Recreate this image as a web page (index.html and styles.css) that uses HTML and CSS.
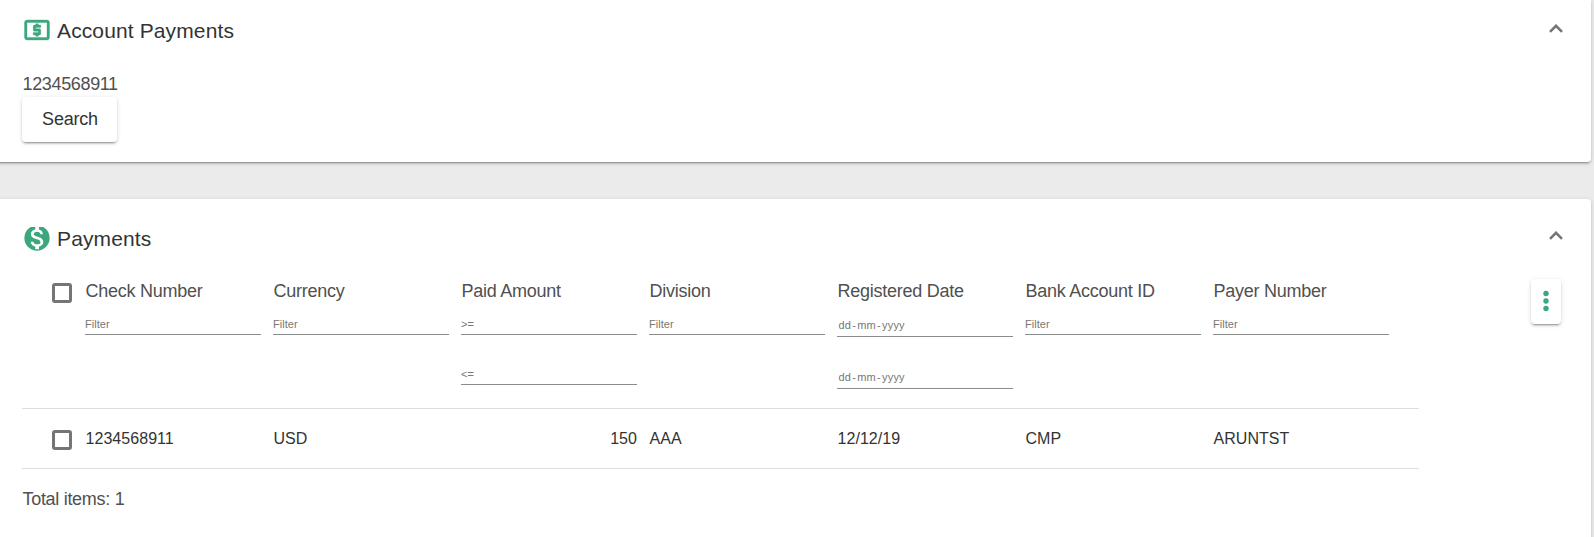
FILE: index.html
```
<!DOCTYPE html>
<html lang="en">
<head>
<meta charset="utf-8">
<title>Account Payments</title>
<link rel="stylesheet" href="styles.css">
</head>
<body>
<section class="card search-card">
  <header class="card-header">
    <svg class="title-icon outlined" viewBox="0 0 24 24"><path d="M11 17h2v-1h1c.55 0 1-.45 1-1v-3c0-.55-.45-1-1-1h-3v-1h4V8h-2V7h-2v1h-1c-.55 0-1 .45-1 1v3c0 .55.45 1 1 1h3v1H9v2h2v1zM20 4H4c-1.110 0-2 .89-2 2v12c0 1.110.89 2 2 2h16c1.110 0 2-.89 2-2V6c0-1.110-.89-2-2-2zm0 14H4V6h16v12z"/></svg>
    <h1 class="title">Account Payments</h1>
    <svg class="chevron" viewBox="0 0 14 9"><path d="M1 7.800 7 1.800l6 6"/></svg>
  </header>
  <div class="account">1234568911</div>
  <button class="search">Search</button>
</section>
<section class="card payments-card">
  <header class="card-header">
    <svg class="title-icon clipped" viewBox="0 0 24 24"><circle cx="12" cy="12" r="10.100"/><path class="dollar" transform="translate(12 12) scale(1.120) translate(-12 -12)" d="M13.410 18.090V20h-2.670v-1.930c-1.710-.36-3.160-1.460-3.270-3.400h1.960c.1 1.050.82 1.870 2.650 1.870 1.960 0 2.400-.98 2.400-1.590 0-.83-.44-1.610-2.670-2.140-2.480-.6-4.180-1.620-4.180-3.670 0-1.720 1.390-2.840 3.110-3.210V4h2.670v1.950c1.860.45 2.790 1.860 2.850 3.390H14.300c-.05-1.110-.64-1.870-2.220-1.870-1.500 0-2.400.68-2.400 1.640 0 .84.65 1.390 2.670 1.910s4.180 1.390 4.180 3.910c-.01 1.830-1.380 2.830-3.120 3.160z"/></svg>
    <h1 class="title">Payments</h1>
    <svg class="chevron" viewBox="0 0 14 9"><path d="M1 7.800 7 1.800l6 6"/></svg>
  </header>
  <div class="content">
    <div class="table">
      <div class="row head">
        <span class="checkbox"></span>
        <div class="col"><div class="label">Check Number</div><div class="filter">Filter</div></div>
        <div class="col"><div class="label">Currency</div><div class="filter">Filter</div></div>
        <div class="col"><div class="label">Paid Amount</div><div class="filter">&gt;=</div><div class="filter">&lt;=</div></div>
        <div class="col"><div class="label">Division</div><div class="filter">Filter</div></div>
        <div class="col"><div class="label">Registered Date</div><div class="filter date"><span>dd</span><span>-</span><span>mm</span><span>-</span><span>yyyy</span></div><div class="filter date"><span>dd</span><span>-</span><span>mm</span><span>-</span><span>yyyy</span></div></div>
        <div class="col"><div class="label">Bank Account ID</div><div class="filter">Filter</div></div>
        <div class="col"><div class="label">Payer Number</div><div class="filter">Filter</div></div>
      </div>
      <div class="row data">
        <span class="checkbox"></span>
        <div class="col">1234568911</div>
        <div class="col">USD</div>
        <div class="col number">150</div>
        <div class="col">AAA</div>
        <div class="col">12/12/19</div>
        <div class="col">CMP</div>
        <div class="col">ARUNTST</div>
      </div>
    </div>
    <button class="menu" aria-label="Menu"><svg viewBox="0 0 6 22"><circle cx="3" cy="3.500" r="2.700"/><circle cx="3" cy="11" r="2.700"/><circle cx="3" cy="18.500" r="2.700"/></svg></button>
  </div>
  <div class="total">Total items: 1</div>
</section>
</body>
</html>
```
FILE: styles.css
```
* { box-sizing: border-box; }
body {
  margin: 0;
  height: 537px;
  overflow: hidden;
  background: #ebebeb;
  color: #505050;
  font: 18px/24px "Liberation Sans", Arial, sans-serif;
  letter-spacing: -0.3px;
}
.card {
  width: 1601px;
  margin-left: -10px;
  padding: 0 28px 0 32px;
  background: #fff;
  border-radius: 4px;
  box-shadow: 0 3px 1px -2px rgba(0,0,0,.2), 0 2px 2px rgba(0,0,0,.14), 0 1px 5px rgba(0,0,0,.12);
}
.search-card { height: 162px; border-top-right-radius: 0; }
.payments-card { height: 360px; margin-top: 37px; padding-top: 24px; }
.card-header { display: flex; align-items: flex-start; height: 72px; padding-top: 15px; }
.payments-card .card-header { height: 56px; padding-top: 0; }
.title-icon { width: 30px; height: 30px; fill: #3aa77d; }
.outlined { stroke: #3aa77d; stroke-width: .3; }
.clipped { clip-path: inset(4px 0 0 0); }
.dollar { fill: #fff; }
.title {
  margin: 3px auto 0 5px;
  color: #333;
  font-size: 21px;
  font-weight: 400;
  line-height: 26px;
  letter-spacing: .12px;
}
.chevron { width: 14px; height: 9px; margin-top: 8.500px; fill: none; stroke: #757575; stroke-width: 2.600; }
.payments-card .chevron { margin-top: 8px; }
.account { height: 25px; padding-left: .5px; letter-spacing: -.35px; }
button {
  border: 0;
  background: #fff;
  border-radius: 4px;
  box-shadow: 0 3px 1px -2px rgba(0,0,0,.2), 0 2px 2px rgba(0,0,0,.14), 0 1px 5px rgba(0,0,0,.12);
}
.search { display: block; width: 95px; height: 45px; padding: 0 0 2px 1px; color: #333; font: inherit; letter-spacing: -.2px; }
.content { display: flex; justify-content: space-between; padding-right: 2px; }
.table { width: 1397px; }
.row { display: flex; gap: 12px; padding-left: 30px; border-bottom: 1px solid #dedede; }
.checkbox { flex: none; width: 20px; height: 20px; margin-right: 1px; border: 3px solid #757575; border-radius: 3px; }
.col { flex: none; width: 176px; }
.head { height: 130px; }
.head .checkbox { margin-top: 4px; }
.label { padding-left: .5px; letter-spacing: -.26px; }
.filter { height: 20px; margin-top: 12px; border-bottom: 1px solid #8b8b8b; color: #777; font-size: 11px; line-height: 18px; letter-spacing: .05px; }
.filter + .filter { margin-top: 30px; }
.date { display: flex; gap: 1.200px; height: 22px; padding-left: 1.500px; line-height: 20px; letter-spacing: .15px; }
.head .date + .date { margin-top: 30px; }
.data { height: 60px; color: #333; font-size: 16px; letter-spacing: .05px; }
.data .checkbox { margin-top: 21px; }
.data .col { padding: 18px 0 0 .5px; }
.number { text-align: right; }
.menu { width: 30px; height: 45px; padding: 3px 0 0; }
.menu svg { display: block; width: 6px; height: 22px; margin: -4px auto 0; fill: #3aa77d; }
.total { margin-top: 18px; padding-left: .5px; letter-spacing: -.3px; }
```
